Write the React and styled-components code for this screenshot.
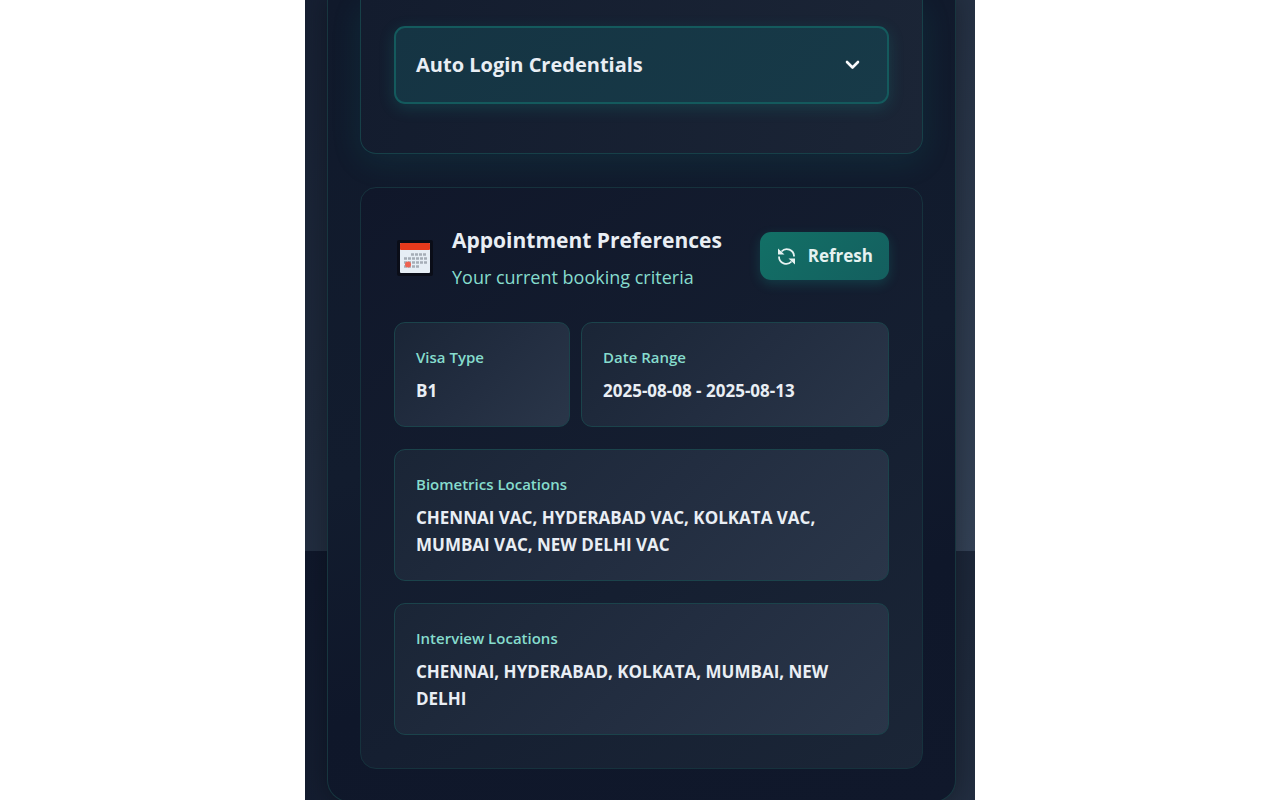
import React, { useState } from "react";
import styled, { createGlobalStyle } from "styled-components";

const GlobalStyle = createGlobalStyle`
* { box-sizing: border-box; }
body {
	margin: 0;
	background: #ffffff;
	color: #e9eef4;
	font-family: "Open Sans", "Noto Sans", sans-serif;
}
`;

const Page = styled.main`
width: 100%;
max-width: 670px;
height: 100vh;
margin: 0 auto;
padding: 0 19px 0 22px;
overflow: hidden;
background: linear-gradient(135deg, #0f172a 0%, #1e293b 50%, #334155 100%) 0 551px / 100% 900px;
`;

const Panel = styled.div`
display: flex;
flex-direction: column;
gap: 33px;
padding: 0 32px 32px;
border: 1px solid #17363f;
border-top: none;
border-radius: 0 0 22px 22px;
background: linear-gradient(165deg, #10192b 0%, #121c2e 50%, #0f172a 75%, #10182b 100%);
box-shadow: 0 0 24px rgba(0, 0, 0, 0.3);
`;

const Section = styled.section`
padding: 33px;
border: 1px solid #16323d;
border-radius: 16px;
background: linear-gradient(145deg, #10172a 0%, #151f31 60%, #1b2637 100%);
`;

const LoginSection = styled(Section)`
padding: 26px 33px 49px;
border-color: #174048;
border-top: none;
border-radius: 0 0 16px 16px;
background: linear-gradient(100deg, #131c2e 0%, #1b2536 100%);
box-shadow: 0 8px 32px rgba(20, 184, 166, 0.1);
`;

const Accordion = styled.button`
display: flex;
align-items: center;
justify-content: space-between;
width: 100%;
padding: 20px 26px 20px 20px;
border: 2px solid #145a5d;
border-radius: 11px;
background: linear-gradient(135deg, #153443, #173a48);
box-shadow: 0 4px 16px rgba(20, 184, 166, 0.18);
color: #e9eef4;
font: 700 20px/34px "Open Sans", "Noto Sans", sans-serif;
cursor: pointer;
`;

const Header = styled.header`
display: flex;
align-items: center;
gap: 16px;
padding-bottom: 31px;
`;

const Titles = styled.div`
flex: 1;
`;

const Title = styled.h2`
margin: 0;
font-size: 21px;
font-weight: 700;
line-height: 38px;
`;

const Subtitle = styled.p`
margin: 4px 0 0;
color: #86dccd;
font-size: 18px;
line-height: 28px;
`;

const RefreshButton = styled.button`
display: flex;
align-items: center;
gap: 11px;
padding: 10px 16px;
border: none;
border-radius: 11px;
background: linear-gradient(135deg, #127066, #145f5f);
box-shadow: 0 4px 12px rgba(20, 184, 166, 0.2);
color: #e6f2f1;
font: 700 17px/28px "Open Sans", "Noto Sans", sans-serif;
cursor: pointer;
`;

const Criteria = styled.dl`
display: grid;
grid-template-columns: 4fr 7fr;
gap: 22px 11px;
margin: 0;
`;

const Card = styled.div`
grid-column: ${(props) => (props.$wide ? "1 / -1" : "auto")};
padding: 22px 21px;
border: 1px solid #1b434b;
border-radius: 11px;
background: linear-gradient(135deg, #1a2536 0%, #222d40 50%, #2a3649 100%);
`;

const Label = styled.dt`
margin-bottom: 8px;
color: #86dccd;
font-size: 15px;
font-weight: 600;
line-height: 24px;
`;

const Value = styled.dd`
margin: 0;
font-size: 17px;
font-weight: 700;
line-height: 27px;
`;

const criteria = [
	{ label: "Visa Type", value: "B1" },
	{ label: "Date Range", value: "2025-08-08 - 2025-08-13" },
	{ label: "Biometrics Locations", value: "CHENNAI VAC, HYDERABAD VAC, KOLKATA VAC, MUMBAI VAC, NEW DELHI VAC", wide: true },
	{ label: "Interview Locations", value: "CHENNAI, HYDERABAD, KOLKATA, MUMBAI, NEW DELHI", wide: true },
];

const ChevronIcon = () => (
	<svg width="18" height="18" viewBox="0 0 18 18" fill="none" stroke="#f8fafc" strokeWidth="2.6" strokeLinecap="round" strokeLinejoin="round" aria-hidden="true">
		<path d="M4 6l5.500 5.500 5.500-5.500" />
	</svg>
);

const CalendarIcon = () => (
	<svg width="42" height="42" viewBox="0 0 42 42" aria-hidden="true">
		<rect x="3" y="5" width="36" height="36" rx="2" fill="#0a0d18" />
		<rect x="6" y="8" width="30" height="30" rx="1" fill="#e6eef5" />
		<rect x="6" y="8" width="30" height="7" rx="1" fill="#e63a1c" />
		<g stroke="#a5adb6" strokeWidth="2.600" strokeDasharray="3 1">
			<path d="M17 19.500h16M10 23.500h23M10 27.500h23M10 31.500h16" />
		</g>
		<circle cx="14" cy="29.500" r="3" fill="#ee6352" />
	</svg>
);

const RefreshIcon = () => (
	<svg width="21" height="21" viewBox="0 0 21 21" fill="none" stroke="#e6f2f1" strokeWidth="1.8" aria-hidden="true">
		<path d="M5.500 5.500a7.200 7.200 0 0 1 12.500 5M15.500 15.500a7.200 7.200 0 0 1-12.500-5" />
		<path d="M2 2.500v6h6.500zM19 18.500v-6h-6.500z" fill="#e6f2f1" stroke="none" />
	</svg>
);

const App = () => {
const [open, setOpen] = useState(false);

return (
	<>
	<GlobalStyle />
	<Page>
		<Panel>
		<LoginSection>
			<Accordion type="button" aria-expanded={open} onClick={() => setOpen(!open)}>
			Auto Login Credentials
			<ChevronIcon />
			</Accordion>
		</LoginSection>
		<Section>
			<Header>
			<CalendarIcon />
			<Titles>
				<Title>Appointment Preferences</Title>
				<Subtitle>Your current booking criteria</Subtitle>
			</Titles>
			<RefreshButton type="button">
				<RefreshIcon />
				Refresh
			</RefreshButton>
			</Header>
			<Criteria>
			{criteria.map((item) => (
				<Card key={item.label} $wide={item.wide}>
				<Label>{item.label}</Label>
				<Value>{item.value}</Value>
				</Card>
			))}
			</Criteria>
		</Section>
		</Panel>
	</Page>
	</>
);
};

export default App;
